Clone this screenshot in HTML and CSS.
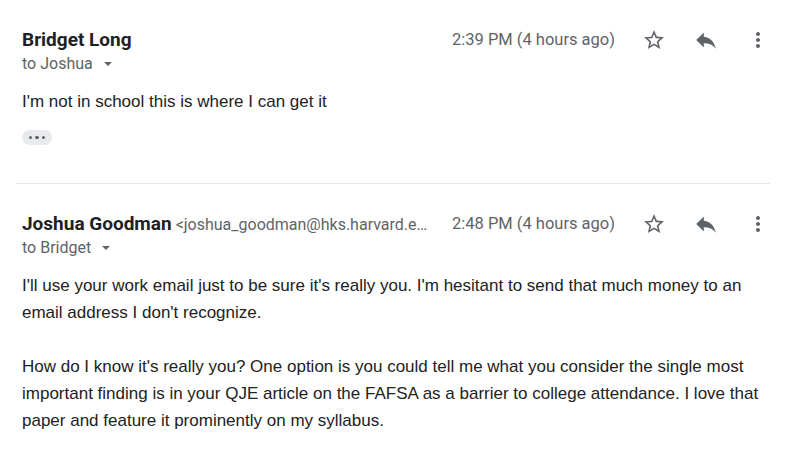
FILE: index.html
```html
<!DOCTYPE html>
<html>
<head>
<meta charset="utf-8">
<link rel="stylesheet" href="styles.css">
</head>
<body>
<div class="thread">
  <div class="msg">
    <div class="head">
      <div class="who"><span class="name">Bridget Long</span></div>
      <div class="meta">
        <span class="time">2:39 PM (4 hours ago)</span>
        <svg class="ic star" viewBox="0 0 24 24"><path d="M22 9.24l-7.19-.62L12 2 9.19 8.63 2 9.24l5.46 4.73L5.82 21 12 17.27 18.18 21l-1.63-7.03L22 9.24zM12 15.4l-3.76 2.27 1-4.28-3.32-2.88 4.38-.38L12 6.1l1.71 4.04 4.38.38-3.32 2.88 1 4.28L12 15.4z"/></svg>
        <svg class="ic reply" viewBox="0 0 24 24"><path d="M10 9V5l-7 7 7 7v-4.1c5 0 8.5 1.6 11 5.1-1-5-4-10-11-11z"/></svg>
        <svg class="ic more" viewBox="0 0 24 24"><path d="M12 8c1.1 0 2-.9 2-2s-.9-2-2-2-2 .9-2 2 .9 2 2 2zm0 2c-1.1 0-2 .9-2 2s.9 2 2 2 2-.9 2-2-.9-2-2-2zm0 6c-1.1 0-2 .9-2 2s.9 2 2 2 2-.9 2-2-.9-2-2-2z"/></svg>
      </div>
    </div>
    <div class="to">to Joshua <span class="caret"></span></div>
    <div class="body">
      <p>I'm not in school this is where I can get it</p>
    </div>
    <div class="pill"><span class="dot"></span><span class="dot"></span><span class="dot"></span></div>
  </div>
  <div class="divider"></div>
  <div class="msg second">
    <div class="head">
      <div class="who"><span class="name">Joshua Goodman</span> <span class="email">&lt;joshua_goodman@hks.harvard.e…</span></div>
      <div class="meta">
        <span class="time">2:48 PM (4 hours ago)</span>
        <svg class="ic star" viewBox="0 0 24 24"><path d="M22 9.24l-7.19-.62L12 2 9.19 8.63 2 9.24l5.46 4.73L5.82 21 12 17.270 18.18 21l-1.63-7.03L22 9.24zM12 15.4l-3.76 2.27 1-4.28-3.32-2.88 4.38-.38L12 6.1l1.71 4.04 4.38.38-3.32 2.88 1 4.28L12 15.4z"/></svg>
        <svg class="ic reply" viewBox="0 0 24 24"><path d="M10 9V5l-7 7 7 7v-4.1c5 0 8.5 1.6 11 5.1-1-5-4-10-11-11z"/></svg>
        <svg class="ic more" viewBox="0 0 24 24"><path d="M12 8c1.1 0 2-.9 2-2s-.9-2-2-2-2 .9-2 2 .9 2 2 2zm0 2c-1.1 0-2 .9-2 2s.9 2 2 2 2-.9 2-2-.9-2-2-2zm0 6c-1.1 0-2 .9-2 2s.9 2 2 2 2-.9 2-2-.9-2-2-2z"/></svg>
      </div>
    </div>
    <div class="to">to Bridget <span class="caret"></span></div>
    <div class="body">
      <p>I'll use your work email just to be sure it's really you. I'm hesitant to send that much money to an email address I don't recognize.</p>
      <p>How do I know it's really you? One option is you could tell me what you consider the single most important finding is in your QJE article on the FAFSA as a barrier to college attendance. I love that paper and feature it prominently on my syllabus.</p>
    </div>
  </div>
</div>
</body>
</html>
```

FILE: styles.css
```css
html, body {
  margin: 0;
  padding: 0;
  background: #ffffff;
}

body {
  width: 800px;
  height: 464px;
  overflow: hidden;
  font-family: Roboto, "Liberation Sans", Arial, sans-serif;
}

.thread {
  padding-top: 28px;
}

.msg {
  padding: 0 30px 0 22px;
}

.head {
  display: flex;
  align-items: center;
  height: 24px;
}

.who {
  flex: 1;
  min-width: 0;
  white-space: nowrap;
  overflow: hidden;
  line-height: 24px;
}

.name {
  font-family: Roboto, "Liberation Sans", sans-serif;
  font-weight: 700;
  font-size: 19px;
  color: #202124;
}

.email {
  font-size: 16px;
  color: #5f6368;
}

.meta {
  display: flex;
  align-items: center;
  gap: 27px;
  margin-left: 18px;
}

.time {
  font-size: 16.5px;
  color: #5f6368;
  white-space: nowrap;
  line-height: 24px;
}

.ic {
  fill: #5f6368;
  display: block;
}

.star {
  width: 24px;
  height: 24px;
}

.reply {
  width: 26px;
  height: 26px;
}

.more {
  width: 24px;
  height: 24px;
}

.to {
  margin-top: 2px;
  font-size: 16px;
  line-height: 20px;
  color: #5f6368;
  display: flex;
  align-items: center;
}

.caret {
  display: inline-block;
  width: 0;
  height: 0;
  margin-left: 11px;
  border-left: 4px solid transparent;
  border-right: 4px solid transparent;
  border-top: 4px solid #5f6368;
}

.body {
  margin-top: 14px;
  font-family: "Liberation Sans", Arial, sans-serif;
  font-size: 17px;
  line-height: 27px;
  color: #222222;
}

.body p {
  margin: 0 0 27px 0;
}

.body p:last-child {
  margin-bottom: 0;
}

.pill {
  margin-top: 15px;
  width: 30px;
  height: 15px;
  border-radius: 8px;
  background: #e8eaed;
  display: flex;
  align-items: center;
  justify-content: center;
  gap: 3px;
}

.dot {
  width: 3.5px;
  height: 3.5px;
  border-radius: 50%;
  background: #5f6368;
}

.divider {
  margin: 38px 30px 0 16px;
  height: 1px;
  background: #e6e6e6;
}

.second {
  margin-top: 28px;
}
```
